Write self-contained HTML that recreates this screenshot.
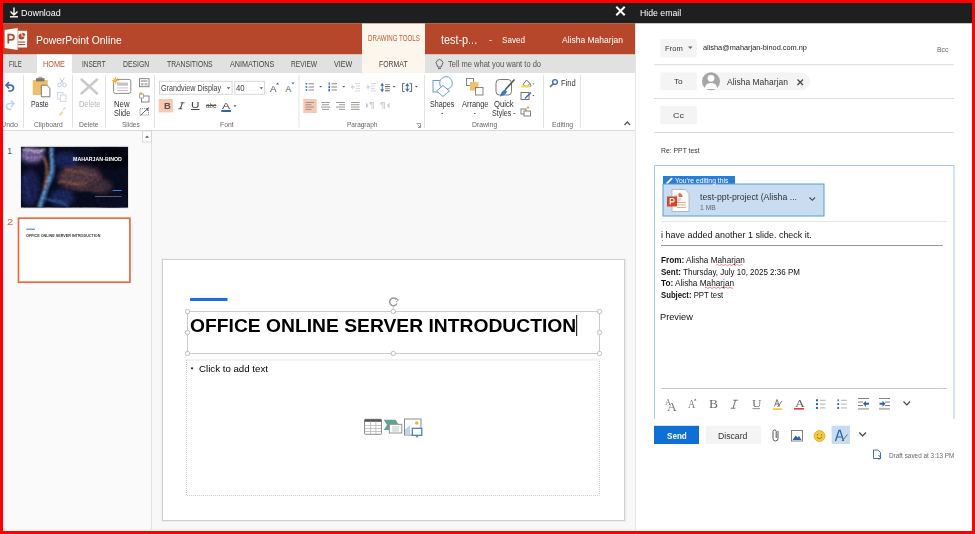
<!DOCTYPE html>
<html><head><meta charset="utf-8">
<style>
*{box-sizing:border-box;margin:0;padding:0}
html,body{width:975px;height:534px;overflow:hidden;background:#fff;font-family:"Liberation Sans",sans-serif;position:relative}
.a{position:absolute}
.t{position:absolute;white-space:nowrap;line-height:1;transform-origin:0 0}
svg{position:absolute;left:0;top:0}
</style></head><body>
<svg width="975" height="534" viewBox="0 0 975 534">
<!-- ===== main bars ===== -->
<rect x="0" y="0" width="975" height="534" fill="#fff"/>
<rect x="3" y="3" width="969" height="20.5" fill="#1f1f1f"/>
<rect x="3" y="23.5" width="632" height="31" fill="#b7472a"/>
<rect x="3" y="54.5" width="632" height="18.5" fill="#e1e1e1"/>
<rect x="37" y="54.5" width="35" height="18.5" fill="#fff"/>
<rect x="362" y="23.5" width="63" height="49.5" fill="#fdf6ec"/>
<rect x="3" y="73" width="632" height="57" fill="#fff"/>
<rect x="3" y="130" width="632" height="1" fill="#dadada"/>
<rect x="3" y="131" width="148" height="400" fill="#fafafa"/>
<rect x="151" y="131" width="1" height="399" fill="#e2e2e2"/>
<rect x="152" y="131" width="483" height="400" fill="#f8f8f8"/>
<rect x="635" y="23.5" width="1" height="507" fill="#e6e6e6"/>
<rect x="636" y="23.5" width="336" height="507" fill="#fff"/>

<!-- ===== top bar icons ===== -->
<g stroke="#fff" stroke-width="1.4" fill="none">
  <path d="M14 7.5 V14.5 M10.5 11.5 L14 15 L17.5 11.5"/>
  <path d="M10 16.8 H18"/>
</g>
<g stroke="#fff" stroke-width="2" stroke-linecap="square">
  <path d="M617 7.5 L624 14.5 M624 7.5 L617 14.5"/>
</g>

<!-- ===== PowerPoint logo ===== -->
<path d="M4.6 30 L17.7 28.1 L17.7 49.9 L4.6 48.1 Z" fill="#fff"/>
<path d="M8.3 43.6 V34.6 H11.3 A2.6 2.6 0 0 1 11.3 39.8 H8.3" fill="none" stroke="#b7472a" stroke-width="1.8"/>
<rect x="18.2" y="30.8" width="8.9" height="16.7" fill="#fff"/>
<path d="M21.5 33.5 A3 3 0 1 0 24.5 36.5 H21.5 Z" fill="#b7472a"/>
<path d="M22.3 32.7 V35.7 H25.3 A3 3 0 0 0 22.3 32.7 Z" fill="#b7472a"/>
<rect x="18.2" y="41.5" width="7" height="1.1" fill="#b7472a"/>
<rect x="18.2" y="44" width="7" height="1.1" fill="#b7472a"/>

<!-- ===== ribbon separators ===== -->
<g fill="#e3e3e3">
  <rect x="23" y="75" width="1" height="53"/>
  <rect x="72" y="75" width="1" height="53"/>
  <rect x="105" y="75" width="1" height="53"/>
  <rect x="154" y="75" width="1" height="53"/>
  <rect x="298.5" y="75" width="1" height="53"/>
  <rect x="424" y="75" width="1" height="53"/>
  <rect x="543" y="75" width="1" height="53"/>
  <rect x="580" y="75" width="1" height="53"/>
</g>

<!-- undo / redo -->
<g fill="none" stroke="#3b6fb1" stroke-width="1.7" stroke-linecap="round" stroke-linejoin="round">
  <path d="M6.5 85.2 H10.5 A3 2.9 0 0 1 10.5 91 H9"/>
  <path d="M8.7 82.5 L6 85.2 L8.7 88"/>
</g>
<g fill="none" stroke="#c3d5ea" stroke-width="1.7" stroke-linecap="round" stroke-linejoin="round">
  <path d="M13.5 103.5 H9.5 A3 2.9 0 0 0 9.5 109.3 H11"/>
  <path d="M11.3 100.8 L14 103.5 L11.3 106.3"/>
</g>

<!-- paste -->
<rect x="32.7" y="80" width="15.1" height="15.1" rx="0.8" fill="#eec06a"/>
<rect x="36" y="78.2" width="8.5" height="3.2" fill="#777"/>
<rect x="38.5" y="77.2" width="3.5" height="2" rx="1" fill="none" stroke="#777" stroke-width="0.8"/>
<path d="M41.3 85.2 H46.8 L49.9 88.3 V96.8 H41.3 Z" fill="#fff" stroke="#6e6e6e" stroke-width="0.9"/>
<!-- cut copy painter -->
<g fill="none" stroke="#aec4de" stroke-width="0.8">
  <circle cx="59.5" cy="85" r="1.8"/><circle cx="64.5" cy="85" r="1.8"/>
  <path d="M60.5 83.5 L64.5 77.8 M63.5 83.5 L59.5 77.8"/>
</g>
<g fill="none" stroke="#cdd6e0" stroke-width="0.9">
  <rect x="57.5" y="92.5" width="5.5" height="6.5"/><rect x="60.5" y="95" width="5.5" height="6.5" fill="#fff"/>
</g>
<g>
  <path d="M58.5 114.5 L62 111 L63.5 112.5 L60 116 Z" fill="#f0dca0"/>
  <path d="M62.8 110.2 L65.5 107.5" stroke="#d0d0d0" stroke-width="1.2"/>
</g>

<!-- delete -->
<g stroke="#c9c9c9" stroke-width="2.4" stroke-linecap="round">
  <path d="M81.5 79.5 L97 93.5 M97 79.5 L81.5 93.5"/>
</g>

<!-- new slide -->
<rect x="113.6" y="79.4" width="17.2" height="14" rx="1.8" fill="#fff" stroke="#8c8c8c" stroke-width="1"/>
<rect x="117" y="82.5" width="11" height="3.2" fill="#c4c4c4"/>
<rect x="117" y="87.5" width="11" height="0.9" fill="#bdbdbd"/>
<rect x="117" y="90" width="11" height="0.9" fill="#bdbdbd"/>
<g stroke="#f0b542" stroke-width="0.9">
  <path d="M115.5 76.8 V84.2 M111.8 80.5 H119.2 M112.9 77.9 L118.1 83.1 M118.1 77.9 L112.9 83.1"/>
</g>
<circle cx="115.5" cy="80.5" r="1.9" fill="#f0b542"/>
<!-- layout / reset / section -->
<rect x="139.5" y="78.7" width="9.5" height="8" fill="#fff" stroke="#7a7a7a" stroke-width="0.9"/>
<rect x="141" y="80.3" width="6.5" height="1.5" fill="#aaa"/>
<rect x="141" y="83" width="2.5" height="2.5" fill="#bbb"/><rect x="144.5" y="83" width="3" height="2.5" fill="#bbb"/>
<rect x="141.5" y="96" width="7.5" height="6" fill="#fff" stroke="#7a7a7a" stroke-width="0.9"/>
<rect x="139.5" y="94" width="4" height="4" fill="#fff" stroke="#9a9a9a" stroke-width="0.8"/>
<circle cx="141" cy="93.5" r="1.6" fill="#f0b542"/>
<rect x="140" y="108.5" width="8.5" height="6.5" fill="none" stroke="#8a8a8a" stroke-width="0.9" stroke-dasharray="1.2 0.8"/>
<path d="M140.5 115.5 L148.5 107.5" stroke="#555" stroke-width="0.9"/>
<path d="M146 110 L148.5 107.5 L148 111 Z" fill="#3b6fb1"/>

<!-- font boxes -->
<rect x="159.5" y="81.3" width="72.6" height="13" fill="#fff" stroke="#d6d6d6" stroke-width="1"/>
<rect x="234.8" y="81.3" width="29.6" height="13" fill="#fff" stroke="#d6d6d6" stroke-width="1"/>
<path d="M226.8 87.3 H230.2 L228.5 89.3 Z" fill="#555"/>
<path d="M259.6 87.3 H263 L261.3 89.3 Z" fill="#555"/>
<path d="M277.6 82.6 L279.2 84.4 H276 Z" fill="#3b6fb1"/>
<path d="M293 84.4 L294.6 82.6 H291.4 Z" fill="#3b6fb1"/>
<rect x="158.7" y="99" width="14.1" height="13.4" fill="#f8c8b0"/>
<rect x="221.3" y="110" width="9.6" height="2" fill="#2f63b0"/>
<path d="M180.5 102.8 H184.5 M178.3 108.8 H182.3 M182.5 102.8 L180.3 108.8" fill="none" stroke="#555" stroke-width="1.1"/>
<path d="M733.3 400.3 H737.8 M730.8 408.3 H735.3 M735.5 400.3 L733 408.3" fill="none" stroke="#777" stroke-width="1.1"/>
<path d="M233.5 105.3 H236.5 L235 107 Z" fill="#555"/>

<!-- paragraph row 1 -->
<g fill="#3b6fb1">
  <rect x="305.6" y="83" width="1.6" height="1.6"/><rect x="305.6" y="86.2" width="1.6" height="1.6"/><rect x="305.6" y="89.2" width="1.6" height="1.6"/>
</g>
<g fill="#888">
  <rect x="308.5" y="83.3" width="5.5" height="1"/><rect x="308.5" y="86.5" width="5.5" height="1"/><rect x="308.5" y="89.5" width="5.5" height="1"/>
</g>
<g fill="#3b6fb1">
  <rect x="328.6" y="82.5" width="1.2" height="2.4"/><rect x="328.4" y="85.8" width="1.6" height="2.4"/><rect x="328.4" y="89" width="1.6" height="2.4"/>
</g>
<g fill="#888">
  <rect x="331.5" y="83.3" width="5.5" height="1"/><rect x="331.5" y="86.5" width="5.5" height="1"/><rect x="331.5" y="89.5" width="5.5" height="1"/>
</g>
<g fill="#c6d6ea">
  <path d="M350.5 87 L353 84.5 V89.5 Z"/><rect x="352" y="86.5" width="3" height="1"/>
  <path d="M370 87 L367.5 84.5 V89.5 Z"/><rect x="366" y="86.5" width="2" height="1"/>
</g>
<g fill="#d4d4d4">
  <rect x="355" y="83" width="5" height="0.9"/><rect x="356" y="85.5" width="4" height="0.9"/><rect x="356" y="88" width="4" height="0.9"/><rect x="355" y="90.5" width="5" height="0.9"/>
  <rect x="371" y="83" width="5" height="0.9"/><rect x="371" y="85.5" width="4" height="0.9"/><rect x="371" y="88" width="4" height="0.9"/><rect x="371" y="90.5" width="5" height="0.9"/>
</g>
<g fill="#3b6fb1">
  <path d="M380.3 85.7 L382.2 82.8 L384.1 85.7 Z"/><path d="M380.3 89.3 L382.2 92.2 L384.1 89.3 Z"/><rect x="381.8" y="85" width="0.9" height="5"/>
</g>
<g>
  <rect x="385" y="84" width="4.8" height="0.9" fill="#999"/><rect x="385" y="86.1" width="4.8" height="1" fill="#555"/><rect x="385" y="88.2" width="4.8" height="0.9" fill="#999"/><rect x="385" y="90.3" width="4.8" height="1" fill="#555"/>
</g>
<path d="M404.6 83.4 H402.6 V91.5 H404.6 M409.6 83.4 H411.6 V91.5 H409.6" fill="none" stroke="#666" stroke-width="1"/>
<rect x="404.5" y="86.5" width="5.5" height="0.7" fill="#ccc"/><rect x="404.5" y="88.3" width="5.5" height="0.7" fill="#ccc"/>
<g fill="#3b6fb1">
  <path d="M405.4 85.9 L407.3 83 L409.2 85.9 Z"/><path d="M405.4 89 L407.3 91.9 L409.2 89 Z"/><rect x="406.9" y="85.5" width="0.9" height="4"/>
</g>
<g fill="#555">
  <path d="M319.2 86 H322.2 L320.7 87.6 Z"/><path d="M342.2 86 H345.2 L343.7 87.6 Z"/><path d="M392.6 86 H395.6 L394.1 87.6 Z"/><path d="M414.8 86 H417.8 L416.3 87.6 Z"/>
</g>
<!-- paragraph row 2 -->
<rect x="303.2" y="99" width="13.5" height="14" fill="#f8c8b0"/>
<g fill="#909090">
  <rect x="305.5" y="102" width="8.5" height="0.9"/><rect x="305.5" y="104.3" width="6" height="0.9"/><rect x="305.5" y="106.6" width="8.5" height="0.9"/><rect x="305.5" y="108.9" width="6" height="0.9"/>
  <rect x="321" y="102" width="9" height="0.9"/><rect x="322" y="104.3" width="7" height="0.9"/><rect x="321" y="106.6" width="9" height="0.9"/><rect x="322" y="108.9" width="7" height="0.9"/>
  <rect x="336" y="102" width="9" height="0.9"/><rect x="339" y="104.3" width="6" height="0.9"/><rect x="336" y="106.6" width="9" height="0.9"/><rect x="339" y="108.9" width="6" height="0.9"/>
  <rect x="351" y="102" width="8.5" height="0.9"/><rect x="351" y="104.3" width="8.5" height="0.9"/><rect x="351" y="106.6" width="8.5" height="0.9"/><rect x="351" y="108.9" width="8.5" height="0.9"/>
</g>
<g fill="#b9cbe3">
  <path d="M366 102.5 L368.5 105.5 L366 108.5 Z"/><path d="M389.5 102.5 L387 105.5 L389.5 108.5 Z"/>
</g>
<g fill="#cfcfcf">
  <rect x="370" y="102" width="4" height="1"/><rect x="371.5" y="102" width="0.9" height="7"/><rect x="373" y="102" width="0.9" height="7"/><circle cx="370.5" cy="103.5" r="1.3"/>
  <rect x="381" y="102" width="4" height="1"/><rect x="382.5" y="102" width="0.9" height="7"/><rect x="384" y="102" width="0.9" height="7"/><circle cx="381.5" cy="103.5" r="1.3"/>
</g>
<!-- dialog launcher -->
<path d="M416.5 123.5 H420.5 V127.5 M417.5 124.5 L420.5 127.5 M418 127.5 H420.5 V125" fill="none" stroke="#888" stroke-width="0.8"/>

<!-- shapes icon -->
<g fill="none" stroke="#6b9bd6" stroke-width="1">
  <rect x="433" y="80.5" width="12.5" height="11.5"/>
  <circle cx="446" cy="83" r="6.3" fill="#fff"/>
  <path d="M443 85.5 L449.5 91 L443 96.5 L436.5 91 Z" fill="#fff"/>
</g>
<!-- arrange icon -->
<rect x="466.5" y="78.5" width="7" height="7" fill="#fff" stroke="#7a7a7a" stroke-width="0.9"/>
<rect x="470" y="82" width="8.5" height="8.5" fill="#eec06a"/>
<rect x="475.5" y="87.5" width="7.5" height="7.5" fill="#fff" stroke="#7a7a7a" stroke-width="0.9"/>
<!-- quick styles -->
<rect x="496" y="79.5" width="15.5" height="15.5" rx="3.5" fill="#fff" stroke="#7a7a7a" stroke-width="1"/>
<path d="M514.5 79.5 L505 90" stroke="#555" stroke-width="1.6"/>
<path d="M500 96.5 C501 92 503 90 505.5 89.8 L507 91.5 C506 94 503.5 96 500 96.5 Z" fill="#3b76c4"/>
<!-- fill / outline / effects -->
<path d="M523 84.5 L526.5 80 L530 83.5 L526.5 87 Z" fill="#fff" stroke="#666" stroke-width="0.9"/>
<path d="M529.5 83.5 L531 85 L530.5 87" fill="none" stroke="#3b6fb1" stroke-width="0.9"/>
<rect x="520.8" y="85.5" width="9.5" height="2" fill="#f4e52a"/>
<path d="M532.5 83.5 H534.5 L533.5 84.8 Z" fill="#555"/>
<rect x="521" y="92.5" width="8" height="7" fill="none" stroke="#666" stroke-width="0.9"/>
<path d="M524.5 98 L530.5 92 L531.5 93 L525.5 99 Z" fill="#3b6fb1"/>
<path d="M532.5 95 H534.5 L533.5 96.3 Z" fill="#555"/>
<rect x="521" y="109" width="5" height="5" fill="#fff" stroke="#777" stroke-width="0.9"/>
<rect x="524" y="111" width="6.5" height="5" fill="#fff" stroke="#777" stroke-width="0.9"/>
<circle cx="528" cy="107.5" r="1.3" fill="#f0b542"/>
<!-- find -->
<circle cx="555" cy="82" r="2.4" fill="none" stroke="#3b6fb1" stroke-width="1.3"/>
<path d="M553.3 83.8 L550 87" stroke="#3b6fb1" stroke-width="1.6"/>
<!-- collapse caret -->
<path d="M624.5 125 L627.3 122 L630 125" fill="none" stroke="#555" stroke-width="1.2"/>
<!-- dropdown dots under shapes/arrange -->
<rect x="441.5" y="113" width="1.5" height="1" fill="#555"/>
<rect x="474" y="113" width="1.5" height="1" fill="#555"/>
<!-- tell me bulb -->
<path d="M437 65 A3.3 3.3 0 1 1 442 65 L441.2 67 H437.8 Z" fill="none" stroke="#555" stroke-width="0.9"/>
<rect x="438" y="68.2" width="3" height="0.9" fill="#555"/>

<!-- ===== left pane ===== -->
<rect x="142.5" y="131" width="9" height="11" fill="#fff" stroke="#d0d0d0" stroke-width="0.8"/>
<path d="M145 137.8 L147 135.5 L149 137.8 Z" fill="#555"/>
<defs>
<clipPath id="th1"><rect x="21" y="146.7" width="107" height="61"/></clipPath>
<filter id="bl2" x="-20%" y="-20%" width="140%" height="140%"><feGaussianBlur stdDeviation="2.2"/></filter>
<filter id="tex" x="0" y="0" width="100%" height="100%"><feTurbulence type="fractalNoise" baseFrequency="0.35" numOctaves="2" seed="3"/><feColorMatrix values="0 0 0 0 0  0 0 0 0 0  0 0 0 0 0  0 0 0 -1.6 1.1"/></filter>
<filter id="bl1" x="-20%" y="-20%" width="140%" height="140%"><feGaussianBlur stdDeviation="1.1"/></filter>
</defs>
<rect x="20" y="145.7" width="109" height="63" fill="#e6e6e6"/>
<g clip-path="url(#th1)">
<rect x="21" y="146.7" width="107" height="61" fill="#0a0d22"/>
<g filter="url(#bl2)">
  <ellipse cx="30" cy="188" rx="10" ry="18" fill="#1e2456"/>
  <ellipse cx="62" cy="198" rx="12" ry="9" fill="#1a2a60"/>
  <ellipse cx="80" cy="178" rx="22" ry="12" fill="#5a3e48"/>
  <ellipse cx="100" cy="186" rx="12" ry="7" fill="#43303c"/>
  <ellipse cx="66" cy="160" rx="12" ry="8" fill="#1c2860"/>
  <ellipse cx="32" cy="155" rx="12" ry="8" fill="#7a68a8"/>
  <ellipse cx="110" cy="158" rx="20" ry="10" fill="#05060c"/>
  <ellipse cx="112" cy="200" rx="16" ry="9" fill="#0c1028"/>
</g>
<g filter="url(#bl1)" opacity="0.9">
  <path d="M52 147 C50 158 56 168 50 180 C45 190 44 198 40 208" stroke="#4a8ad0" stroke-width="4" fill="none"/>
  <path d="M51 148 C49 158 54 167 48 179 C44 189 42 197 38 207" stroke="#a8d0f0" stroke-width="1.3" fill="none"/>
  <path d="M44 157 C48 166 48 176 44 188" stroke="#b06c4c" stroke-width="2.4" fill="none"/>
  <path d="M23 150 C30 148 36 155 45 149" stroke="#e8d4f0" stroke-width="2.2" fill="none"/>
  <path d="M26 158 C31 156 36 161 42 156" stroke="#b898d0" stroke-width="1.5" fill="none"/>
  <path d="M58 183 C66 179 71 187 86 183" stroke="#a06850" stroke-width="1.6" fill="none"/>
  <path d="M64 169 C72 173 80 169 92 175" stroke="#8a5c48" stroke-width="1.6" fill="none"/>
  <path d="M80 191 C86 187 92 193 104 189" stroke="#6a4a44" stroke-width="1.4" fill="none"/>
  <path d="M44 198 C52 202 58 199 68 206" stroke="#3a5eaa" stroke-width="2.2" fill="none"/>
  <path d="M24 175 C28 182 26 190 30 200" stroke="#2a3a80" stroke-width="2" fill="none"/>
</g>
<rect x="21" y="146.7" width="107" height="61" filter="url(#tex)" opacity="0.35"/>
</g>
<rect x="112.6" y="190" width="9" height="1" fill="#3a7be0"/>
<rect x="95" y="196" width="26.5" height="0.8" fill="#6a7080"/>

<rect x="18.5" y="218.2" width="111.4" height="64" fill="#fff" stroke="#e8693f" stroke-width="1.7"/>
<rect x="26.3" y="228.6" width="8.7" height="1.2" fill="#4a8ae8"/>

<!-- ===== main slide ===== -->
<rect x="161" y="258.5" width="465.5" height="263.5" fill="#ededed"/>
<rect x="162.5" y="259.5" width="462" height="261" fill="#fff" stroke="#cfcfcf" stroke-width="1"/>
<rect x="190" y="298" width="37.5" height="3" fill="#1a6fdf"/>
<rect x="187.5" y="311.5" width="412" height="42" fill="none" stroke="#cbcbcb" stroke-width="1"/>
<path d="M393.3 306 V311.5" stroke="#bbb" stroke-width="0.8"/>
<path d="M396.5 299.5 A3.8 3.8 0 1 0 397 303.5" fill="none" stroke="#9a9a9a" stroke-width="1.5"/>
<path d="M395.5 298 L398.5 300 L396 302" fill="none" stroke="#9a9a9a" stroke-width="1"/>
<g fill="#fff" stroke="#b0b0b0" stroke-width="0.8">
  <circle cx="187.5" cy="311.5" r="2.2"/><circle cx="393.3" cy="311.5" r="2.2"/><circle cx="599.5" cy="311.5" r="2.2"/>
  <circle cx="187.5" cy="332.5" r="2.2"/><circle cx="599.5" cy="332.5" r="2.2"/>
  <circle cx="187.5" cy="353.5" r="2.2"/><circle cx="393.3" cy="353.5" r="2.2"/><circle cx="599.5" cy="353.5" r="2.2"/>
</g>
<rect x="186.5" y="360" width="413" height="135.5" fill="none" stroke="#cdcdcd" stroke-width="1" stroke-dasharray="1 1"/>
<rect x="576" y="315" width="1.2" height="21" fill="#333"/>
<circle cx="192" cy="368.3" r="1.1" fill="#222"/>

<!-- placeholder icons -->
<rect x="364.5" y="419.3" width="17" height="15" rx="1" fill="#fff" stroke="#8a8a8a" stroke-width="1"/>
<rect x="364.5" y="419.3" width="17" height="2.5" fill="#555"/>
<g fill="#b8b8b8"><rect x="370" y="421.5" width="0.8" height="12.5"/><rect x="375.5" y="421.5" width="0.8" height="12.5"/>
<rect x="365" y="425" width="16" height="0.8"/><rect x="365" y="428" width="16" height="0.8"/><rect x="365" y="431" width="16" height="0.8"/></g>
<path d="M383.7 419.8 H395.5 L399 425 L395.5 430 H383.7 L387 425 Z" fill="#5fa58e"/>
<rect x="389.3" y="424.3" width="12.5" height="8.7" fill="#fff" stroke="#8a8a8a" stroke-width="0.9"/>
<g fill="#aaa"><rect x="392" y="426.6" width="7" height="0.7"/><rect x="392" y="428.6" width="7" height="0.7"/><rect x="392" y="430.6" width="7" height="0.7"/></g>
<rect x="404.5" y="419" width="16.5" height="16" fill="#fff" stroke="#8a8a8a" stroke-width="1"/>
<circle cx="416.7" cy="423" r="1.8" fill="#eab64a"/>
<path d="M405 434.5 V429.5 L410 425 V434.5 Z" fill="#bcd3ee"/>
<rect x="412.3" y="428.3" width="9.5" height="7" fill="#fff" stroke="#3f78c4" stroke-width="1.2"/>
<path d="M415.5 437.2 H418.5 L417 435.5 Z" fill="#3f78c4"/>

<!-- ===== email panel ===== -->
<rect x="660.4" y="39" width="36.4" height="18.3" fill="#f4f4f4"/>
<path d="M688 46.5 H692.6 L690.3 49 Z" fill="#666"/>
<rect x="654" y="64.2" width="300" height="1" fill="#dcdcdc"/>
<rect x="660.4" y="72.4" width="36.4" height="17.8" fill="#f4f4f4"/>
<rect x="701.8" y="72.4" width="108.2" height="17.8" rx="8.9" fill="#f4f4f4"/>
<circle cx="711" cy="81.3" r="9" fill="#a6a6a6"/>
<circle cx="711" cy="78.3" r="3.4" fill="#fff"/>
<path d="M704.5 89 C705 84.5 708 83 711 83 C714 83 717 84.5 717.5 89 Z" fill="#fff"/>
<path d="M797.5 79.5 L803 85 M803 79.5 L797.5 85" stroke="#444" stroke-width="1.2"/>
<rect x="654" y="98" width="300" height="1" fill="#dcdcdc"/>
<rect x="660.4" y="106" width="36.4" height="18.3" fill="#f4f4f4"/>
<rect x="654" y="132" width="300" height="1" fill="#dcdcdc"/>
<!-- body box -->
<path d="M654.5 419 V165.5 H954 V419" fill="none" stroke="#a9c9ea" stroke-width="1"/>
<rect x="663" y="176" width="72" height="8.5" fill="#2b7cd3"/>
<path d="M666.5 182.5 L671.5 177.5 L672.8 178.8 L667.8 183.8 L666 184 Z" fill="#fff"/>
<rect x="663" y="184" width="161" height="32" fill="#c8ddf2" stroke="#5a9ad6" stroke-width="1"/>
<!-- ppt icon -->
<path d="M672 189.5 H685 L689 193.5 V211.5 H672 Z" fill="#fff" stroke="#aaa" stroke-width="0.8"/>
<path d="M677.5 194 A4 4 0 1 0 681.5 198 H677.5 Z" fill="#d9d9d9"/>
<path d="M678.5 193 V197 H682.5 A4 4 0 0 0 678.5 193 Z" fill="#e8683f"/>
<rect x="677" y="202" width="9" height="0.9" fill="#e8a08a"/><rect x="677" y="204.5" width="9" height="0.9" fill="#e8a08a"/><rect x="677" y="207" width="9" height="0.9" fill="#e8a08a"/>
<rect x="667" y="196.5" width="10" height="10" fill="#d24726"/>
<path d="M670.2 204.5 V198.5 H672.5 A1.7 1.7 0 0 1 672.5 201.9 H670.2" fill="none" stroke="#fff" stroke-width="1.1"/>
<path d="M809.5 197.5 L812.3 200.3 L815 197.5" fill="none" stroke="#444" stroke-width="1.1"/>
<rect x="661" y="221" width="286" height="1" fill="#e6e6e6"/>
<path d="M662 240 L663 241" stroke="#e04040" stroke-width="0.8"/>
<rect x="661" y="245" width="282" height="1" fill="#999"/>
<path d="M716.5 265 q1 -1 2 0 t2 0 t2 0 t2 0 t2 0 t2 0 t2 0 t2 0 t2 0 t2 0 t2 0 t2 0 t2 0" fill="none" stroke="#e05050" stroke-width="0.7"/>
<path d="M705 287.8 q1 -1 2 0 t2 0 t2 0 t2 0 t2 0 t2 0 t2 0 t2 0 t2 0 t2 0 t2 0 t2 0 t2 0 t2 0" fill="none" stroke="#e05050" stroke-width="0.7"/>
<rect x="661" y="388" width="286" height="1" fill="#c9c9c9"/>

<!-- bottom buttons -->
<rect x="654" y="425.8" width="45" height="18.2" fill="#0f6fd4"/>
<rect x="705.6" y="425.8" width="55.4" height="18.2" fill="#f4f4f4"/>
<rect x="831.6" y="425.7" width="18.4" height="18.3" fill="#c8dcf0"/>
<path d="M859.3 432.5 L862.6 435.8 L866 432.5" fill="none" stroke="#444" stroke-width="1.2"/>
<path d="M903.5 401.5 L906.8 404.8 L910 401.5" fill="none" stroke="#444" stroke-width="1.2"/>
<!-- paperclip -->
<path d="M778 431 V438.5 A2.5 2.5 0 0 1 773 438.5 V431.5 A1.6 1.6 0 0 1 776.2 431.5 V438" fill="none" stroke="#555" stroke-width="1"/>
<!-- image icon -->
<rect x="791.5" y="430.5" width="11" height="10.5" fill="#fff" stroke="#777" stroke-width="0.9"/>
<path d="M792.5 440 L795.5 435.5 L797.5 437.5 L799 436 L801.5 440 Z" fill="#2b64b0"/>
<!-- emoji -->
<circle cx="819.5" cy="436" r="5.5" fill="#f5c842" stroke="#d9a520" stroke-width="0.7"/>
<circle cx="817.6" cy="434.8" r="0.6" fill="#7a5a00"/><circle cx="821.4" cy="434.8" r="0.6" fill="#7a5a00"/>
<path d="M816.8 437.3 Q819.5 440 822.2 437.3" fill="none" stroke="#7a5a00" stroke-width="0.7"/>
<!-- format A -->
<path d="M835.5 441 L839 430.5 H840.2 L843.5 441" fill="none" stroke="#2b64b0" stroke-width="1.3"/>
<path d="M837 437 H842" stroke="#2b64b0" stroke-width="1"/>
<path d="M842 441 L847.5 434.5" stroke="#666" stroke-width="1"/>
<!-- draft icon -->
<path d="M873.5 450 H878 L880.5 452.5 V458.5 H873.5 Z" fill="#fff" stroke="#2b64b0" stroke-width="0.9"/>
<path d="M878.5 455 L881 458 L878.5 459.5" fill="none" stroke="#2b64b0" stroke-width="0.9"/>

<!-- format toolbar -->
<g fill="#2b64b0">
  <rect x="816" y="399.3" width="2" height="2"/><rect x="816" y="403.1" width="2" height="2"/><rect x="816" y="406.9" width="2" height="2"/>
  <rect x="837.6" y="399.3" width="1.2" height="2"/><rect x="837.3" y="403.1" width="1.8" height="2"/><rect x="837.3" y="406.9" width="1.8" height="2"/>
</g>
<g fill="#b0b0b0">
  <rect x="820" y="399.8" width="5.5" height="1"/><rect x="820" y="403.6" width="5.5" height="1"/><rect x="820" y="407.4" width="5.5" height="1"/>
  <rect x="841" y="399.8" width="5.8" height="1"/><rect x="841" y="403.6" width="5.8" height="1"/><rect x="841" y="407.4" width="5.8" height="1"/>
</g>
<g fill="#777">
  <rect x="858" y="398" width="11" height="0.9"/><rect x="858" y="401.6" width="5" height="0.9"/><rect x="858" y="405" width="5" height="0.9"/><rect x="858" y="408.5" width="11" height="0.9"/>
  <rect x="879" y="398" width="11" height="0.9"/><rect x="885" y="401.6" width="5" height="0.9"/><rect x="885" y="405" width="5" height="0.9"/><rect x="879" y="408.5" width="11" height="0.9"/>
</g>
<g fill="#2b64b0">
  <path d="M863 403.8 L866 400.8 V402.8 H869 V404.8 H866 V406.8 Z"/>
  <path d="M885.5 403.8 L882.5 400.8 V402.8 H879.5 V404.8 H882.5 V406.8 Z"/>
  <path d="M694 400.5 L695.2 398.8 L696.4 400.5 Z"/>
</g>
<rect x="773" y="408.3" width="9" height="1.6" fill="#f2c230"/>
<rect x="794" y="408" width="10" height="1.6" fill="#e03a3a"/>
<rect x="752.5" y="408.3" width="7.5" height="0.8" fill="#777"/>
<path d="M774.5 406.5 L777 399.5 L779.5 406.5 M775.5 404 H778.5 M777.5 407 L782 401" fill="none" stroke="#666" stroke-width="0.9"/>

</svg>
<div class="t" style="left:21.25px;top:8.88px;font-size:9px;color:#fff;font-weight:400;transform:scaleX(0.9935);">Download</div>
<div class="t" style="left:640.27px;top:8.88px;font-size:9px;color:#fff;font-weight:400;transform:scaleX(0.9697);">Hide email</div>
<div class="t" style="left:35.76px;top:34.61px;font-size:10.5px;color:#fff;font-weight:400;transform:scaleX(0.9854);">PowerPoint Online</div>
<div class="t" style="left:367.96px;top:34.30px;font-size:8.5px;color:#c4593a;font-weight:400;transform:scaleX(0.7234);">DRAWING TOOLS</div>
<div class="t" style="left:440.77px;top:33.64px;font-size:12px;color:#fff;font-weight:400;transform:scaleX(0.9032);">test-p...</div>
<div class="t" style="left:489.00px;top:36.18px;font-size:9px;color:#fff;font-weight:400;">-</div>
<div class="t" style="left:501.75px;top:36.18px;font-size:9px;color:#fff;font-weight:400;transform:scaleX(0.8980);">Saved</div>
<div class="t" style="left:561.80px;top:36.18px;font-size:9px;color:#fff;font-weight:400;transform:scaleX(0.9453);">Alisha Maharjan</div>
<div class="t" style="left:8.50px;top:59.68px;font-size:9px;color:#444;font-weight:400;transform:scaleX(0.6667);">FILE</div>
<div class="t" style="left:82.46px;top:59.68px;font-size:9px;color:#444;font-weight:400;transform:scaleX(0.7188);">INSERT</div>
<div class="t" style="left:123.43px;top:59.68px;font-size:9px;color:#444;font-weight:400;transform:scaleX(0.7576);">DESIGN</div>
<div class="t" style="left:166.81px;top:59.68px;font-size:9px;color:#444;font-weight:400;transform:scaleX(0.7531);">TRANSITIONS</div>
<div class="t" style="left:230.00px;top:59.68px;font-size:9px;color:#444;font-weight:400;transform:scaleX(0.8000);">ANIMATIONS</div>
<div class="t" style="left:291.05px;top:59.68px;font-size:9px;color:#444;font-weight:400;transform:scaleX(0.7338);">REVIEW</div>
<div class="t" style="left:334.40px;top:59.68px;font-size:9px;color:#444;font-weight:400;transform:scaleX(0.7912);">VIEW</div>
<div class="t" style="left:379.42px;top:59.68px;font-size:9px;color:#444;font-weight:400;transform:scaleX(0.7671);">FORMAT</div>
<div class="t" style="left:43.39px;top:59.68px;font-size:9px;color:#c4502c;font-weight:400;transform:scaleX(0.8077);">HOME</div>
<div class="t" style="left:448.28px;top:60.10px;font-size:8.5px;color:#555;font-weight:400;transform:scaleX(0.8873);">Tell me what you want to do</div>
<div class="t" style="left:31.39px;top:99.80px;font-size:8.5px;color:#333;font-weight:400;transform:scaleX(0.8098);">Paste</div>
<div class="t" style="left:78.55px;top:99.80px;font-size:8.5px;color:#b4b4b4;font-weight:400;transform:scaleX(0.8723);">Delete</div>
<div class="t" style="left:114.32px;top:99.80px;font-size:8.5px;color:#333;font-weight:400;transform:scaleX(0.9108);">New</div>
<div class="t" style="left:114.37px;top:109.10px;font-size:8.5px;color:#333;font-weight:400;transform:scaleX(0.8556);">Slide</div>
<div class="t" style="left:160.78px;top:84.20px;font-size:8.5px;color:#444;font-weight:400;transform:scaleX(0.8498);">Grandview Display</div>
<div class="t" style="left:235.77px;top:84.20px;font-size:8.5px;color:#444;font-weight:400;transform:scaleX(0.9111);">40</div>
<div class="t" style="left:430.28px;top:100.00px;font-size:8.5px;color:#333;font-weight:400;transform:scaleX(0.8393);">Shapes</div>
<div class="t" style="left:461.90px;top:100.00px;font-size:8.5px;color:#333;font-weight:400;transform:scaleX(0.8739);">Arrange</div>
<div class="t" style="left:493.95px;top:100.00px;font-size:8.5px;color:#333;font-weight:400;transform:scaleX(0.9035);">Quick</div>
<div class="t" style="left:491.88px;top:109.00px;font-size:8.5px;color:#333;font-weight:400;transform:scaleX(0.8364);">Styles -</div>
<div class="t" style="left:560.83px;top:78.50px;font-size:8.5px;color:#333;font-weight:400;transform:scaleX(0.8918);">Find</div>
<div class="t" style="left:1.06px;top:121.03px;font-size:8px;color:#666;font-weight:400;transform:scaleX(0.8877);">Undo</div>
<div class="t" style="left:33.58px;top:121.03px;font-size:8px;color:#666;font-weight:400;transform:scaleX(0.8421);">Clipboard</div>
<div class="t" style="left:79.36px;top:121.03px;font-size:8px;color:#666;font-weight:400;transform:scaleX(0.8500);">Delete</div>
<div class="t" style="left:121.60px;top:121.03px;font-size:8px;color:#666;font-weight:400;transform:scaleX(0.8095);">Slides</div>
<div class="t" style="left:220.36px;top:121.03px;font-size:8px;color:#666;font-weight:400;transform:scaleX(0.8525);">Font</div>
<div class="t" style="left:346.89px;top:121.03px;font-size:8px;color:#666;font-weight:400;transform:scaleX(0.8138);">Paragraph</div>
<div class="t" style="left:471.65px;top:121.03px;font-size:8px;color:#666;font-weight:400;transform:scaleX(0.8607);">Drawing</div>
<div class="t" style="left:551.55px;top:121.03px;font-size:8px;color:#666;font-weight:400;transform:scaleX(0.8602);">Editing</div>
<div class="t" style="left:190.04px;top:316.42px;font-size:19px;color:#000;font-weight:700;transform:scaleX(1.0144);">OFFICE ONLINE SERVER INTRODUCTION</div>
<div class="t" style="left:163.67px;top:101.68px;font-size:9px;color:#555;font-weight:700;transform:scaleX(1.0545);">B</div>
<div class="t" style="left:190.53px;top:101.48px;font-size:9px;color:#444;font-weight:400;transform:scaleX(1.3000);text-decoration:underline">U</div>
<div class="t" style="left:205.80px;top:102.33px;font-size:8px;color:#555;font-weight:400;transform:scaleX(0.8000);text-decoration:line-through">abc</div>
<div class="t" style="left:222.20px;top:100.66px;font-size:9.5px;color:#444;font-weight:400;transform:scaleX(1.2800);">A</div>
<div class="t" style="left:269.80px;top:83.76px;font-size:9.5px;color:#555;font-weight:400;transform:scaleX(1.0400);">A</div>
<div class="t" style="left:285.60px;top:84.60px;font-size:8.5px;color:#555;font-weight:400;transform:scaleX(1.0000);">A</div>
<div class="t" style="left:664.60px;top:398.38px;font-size:9px;color:#777;font-weight:400;transform:scaleX(0.9167);font-family:'Liberation Serif'">A</div>
<div class="t" style="left:667.00px;top:400.64px;font-size:12px;color:#777;font-weight:400;transform:scaleX(1.1250);font-family:'Liberation Serif'">A</div>
<div class="t" style="left:688.00px;top:399.07px;font-size:11.5px;color:#777;font-weight:400;transform:scaleX(0.8667);font-family:'Liberation Serif'">A</div>
<div class="t" style="left:709.33px;top:399.07px;font-size:11.5px;color:#666;font-weight:400;transform:scaleX(1.1667);font-family:'Liberation Serif'">B</div>
<div class="t" style="left:751.50px;top:398.49px;font-size:11px;color:#777;font-weight:400;transform:scaleX(1.2000);font-family:'Liberation Serif'">U</div>
<div class="t" style="left:794.50px;top:398.61px;font-size:10.5px;color:#666;font-weight:400;transform:scaleX(1.2857);font-family:'Liberation Serif'">A</div>
<div class="t" style="left:7.25px;top:146.60px;font-size:8.5px;color:#555;font-weight:400;transform:scaleX(1.0000);">1</div>
<div class="t" style="left:6.88px;top:217.88px;font-size:9px;color:#d86a3d;font-weight:400;transform:scaleX(1.2500);">2</div>
<div class="t" style="left:26.28px;top:234.44px;font-size:4.2px;color:#333;font-weight:700;transform:scaleX(0.8862);">OFFICE ONLINE SERVER INTRODUCTION</div>
<div class="t" style="left:72.55px;top:157.09px;font-size:5.8px;color:#fff;font-weight:700;transform:scaleX(0.9094);">MAHARJAN-BINOD</div>
<div class="t" style="left:198.51px;top:364.10px;font-size:9.8px;color:#000;font-weight:400;transform:scaleX(0.9892);">Click to add text</div>
<div class="t" style="left:665.29px;top:45.33px;font-size:8px;color:#333;font-weight:400;transform:scaleX(0.9486);">From</div>
<div class="t" style="left:703.17px;top:43.93px;font-size:8px;color:#222;font-weight:400;transform:scaleX(0.9191);">alisha@maharjan-binod.com.np</div>
<div class="t" style="left:936.86px;top:45.73px;font-size:8px;color:#666;font-weight:400;transform:scaleX(0.8571);">Bcc</div>
<div class="t" style="left:674.44px;top:77.73px;font-size:8px;color:#333;font-weight:400;transform:scaleX(1.0250);">To</div>
<div class="t" style="left:726.70px;top:77.78px;font-size:9px;color:#333;font-weight:400;transform:scaleX(0.9437);">Alisha Maharjan</div>
<div class="t" style="left:672.94px;top:111.73px;font-size:8px;color:#333;font-weight:400;transform:scaleX(1.1111);">Cc</div>
<div class="t" style="left:661.04px;top:147.15px;font-size:7.5px;color:#333;font-weight:400;transform:scaleX(0.9102);">Re: PPT test</div>
<div class="t" style="left:674.77px;top:177.15px;font-size:7.5px;color:#fff;font-weight:400;transform:scaleX(0.9060);">You’re editing this</div>
<div class="t" style="left:699.74px;top:193.30px;font-size:8.5px;color:#333;font-weight:400;transform:scaleX(1.0267);">test-ppt-project (Alisha ...</div>
<div class="t" style="left:699.52px;top:204.07px;font-size:7px;color:#666;font-weight:400;transform:scaleX(0.9677);">1 MB</div>
<div class="t" style="left:661.00px;top:231.38px;font-size:9px;color:#111;font-weight:400;transform:scaleX(0.9983);">i have added another 1 slide. check it.</div>
<div class="t" style="left:660.53px;top:256.05px;font-size:8.8px;color:#111;font-weight:400;transform:scaleX(0.9326);"><b>From:</b> Alisha Maharjan</div>
<div class="t" style="left:660.77px;top:267.75px;font-size:8.8px;color:#111;font-weight:400;transform:scaleX(0.9094);"><b>Sent:</b> Thursday, July 10, 2025 2:36 PM</div>
<div class="t" style="left:661.00px;top:278.85px;font-size:8.8px;color:#111;font-weight:400;transform:scaleX(0.9355);"><b>To:</b> Alisha Maharjan</div>
<div class="t" style="left:660.78px;top:290.55px;font-size:8.8px;color:#111;font-weight:400;transform:scaleX(0.8794);"><b>Subject:</b> PPT test</div>
<div class="t" style="left:660.21px;top:313.35px;font-size:8.8px;color:#111;font-weight:400;transform:scaleX(1.0492);">Preview</div>
<div class="t" style="left:666.76px;top:432.30px;font-size:8.5px;color:#fff;font-weight:700;transform:scaleX(0.9500);">Send</div>
<div class="t" style="left:718.24px;top:432.30px;font-size:8.5px;color:#333;font-weight:400;transform:scaleX(1.0182);">Discard</div>
<div class="t" style="left:889.14px;top:452.37px;font-size:7px;color:#666;font-weight:400;transform:scaleX(0.9135);">Draft saved at 3:13 PM</div>
<!-- red border on top -->
<div class="a" style="left:0;top:0;width:975px;height:3px;background:#fe0000"></div>
<div class="a" style="left:0;top:531px;width:975px;height:3px;background:#fe0000"></div>
<div class="a" style="left:0;top:0;width:3px;height:534px;background:#fe0000"></div>
<div class="a" style="left:972px;top:0;width:3px;height:534px;background:#fe0000"></div>
</body></html>
